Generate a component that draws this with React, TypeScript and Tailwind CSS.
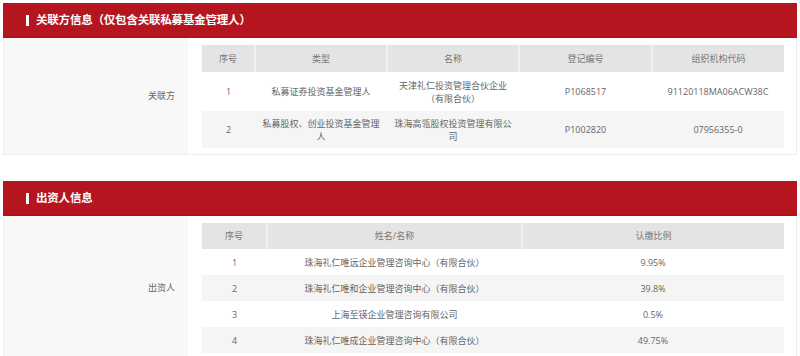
import React from 'react';

const related = [
  { no: '1', type: '私募证券投资基金管理人', name: '天津礼仁投资管理合伙企业（有限合伙）', reg: 'P1068517', code: '91120118MA06ACW38C', h: 'h-[39px]' },
  { no: '2', type: '私募股权、创业投资基金管理人', name: '珠海高瓴股权投资管理有限公司', reg: 'P1002820', code: '07956355-0', h: 'h-[37px]' },
];

const investors = [
  { no: '1', name: '珠海礼仁唯远企业管理咨询中心（有限合伙）', ratio: '9.95%' },
  { no: '2', name: '珠海礼仁唯和企业管理咨询中心（有限合伙）', ratio: '39.8%' },
  { no: '3', name: '上海至锳企业管理咨询有限公司', ratio: '0.5%' },
  { no: '4', name: '珠海礼仁唯成企业管理咨询中心（有限合伙）', ratio: '49.75%' },
];

function Section({ title, label, children }: { title: string; label: string; children: React.ReactNode }) {
  return (
    <section>
      <div className="h-[35px] bg-[#b5151e] border-b border-[#a3111a] flex items-center pl-[23px]">
        <span className="w-[3px] h-[11px] bg-white mr-[7px]" />
        <h2 className="text-white text-[11.5px] font-bold tracking-[-0.2px]">{title}</h2>
      </div>
      <div className="flex border border-t-0 border-[#eeeeee]">
        <div className="w-[184px] shrink-0 bg-[#f8f8f8] flex items-center justify-end pr-[13px] text-[9px] text-[#666]">
          {label}
        </div>
        <div className="flex-1 pl-[14px] pr-[12px] pt-[7px] pb-[6px]">{children}</div>
      </div>
    </section>
  );
}

const th = 'h-[27px] bg-[#e4e4e4] font-normal text-[#777] border-r-2 border-[#f1f1f1] last:border-r-0';
const td = 'px-[5px] text-center leading-[13px]';

export default function App() {
  return (
    <div className="w-[800px] h-[356px] overflow-hidden bg-white px-[3px] pt-[3px] font-['Open_Sans','Noto_Sans_CJK_SC',sans-serif]">
      <Section title="关联方信息（仅包含关联私募基金管理人）" label="关联方">
        <table className="w-full table-fixed border-collapse text-[9px] text-[#666]">
          <colgroup>
            <col className="w-[53px]" />
            <col className="w-[132px]" />
            <col className="w-[132px]" />
            <col className="w-[133px]" />
            <col className="w-[132px]" />
          </colgroup>
          <thead>
            <tr>
              <th className={th}>序号</th>
              <th className={th}>类型</th>
              <th className={th}>名称</th>
              <th className={th}>登记编号</th>
              <th className={th}>组织机构代码</th>
            </tr>
          </thead>
          <tbody>
            {related.map((r, i) => (
              <tr key={r.no} className={`${r.h} ${i % 2 ? 'bg-[#f5f5f5]' : 'bg-white'}`}>
                <td className={td}>{r.no}</td>
                <td className={td}>{r.type}</td>
                <td className={td}>{r.name}</td>
                <td className={td}>{r.reg}</td>
                <td className={td}>{r.code}</td>
              </tr>
            ))}
          </tbody>
        </table>
      </Section>

      <div className="mt-[26px]">
        <Section title="出资人信息" label="出资人">
          <table className="w-full table-fixed border-collapse text-[9px] text-[#666]">
            <colgroup>
              <col className="w-[65px]" />
              <col className="w-[255px]" />
              <col className="w-[262px]" />
            </colgroup>
            <thead>
              <tr>
                <th className={`${th} !h-[26px]`}>序号</th>
                <th className={`${th} !h-[26px]`}>姓名/名称</th>
                <th className={`${th} !h-[26px]`}>认缴比例</th>
              </tr>
            </thead>
            <tbody>
              {investors.map((r, i) => (
                <tr key={r.no} className={`h-[26px] ${i % 2 ? 'bg-[#f5f5f5]' : 'bg-white'}`}>
                  <td className={td}>{r.no}</td>
                  <td className={td}>{r.name}</td>
                  <td className={td}>{r.ratio}</td>
                </tr>
              ))}
            </tbody>
          </table>
        </Section>
      </div>
    </div>
  );
}
